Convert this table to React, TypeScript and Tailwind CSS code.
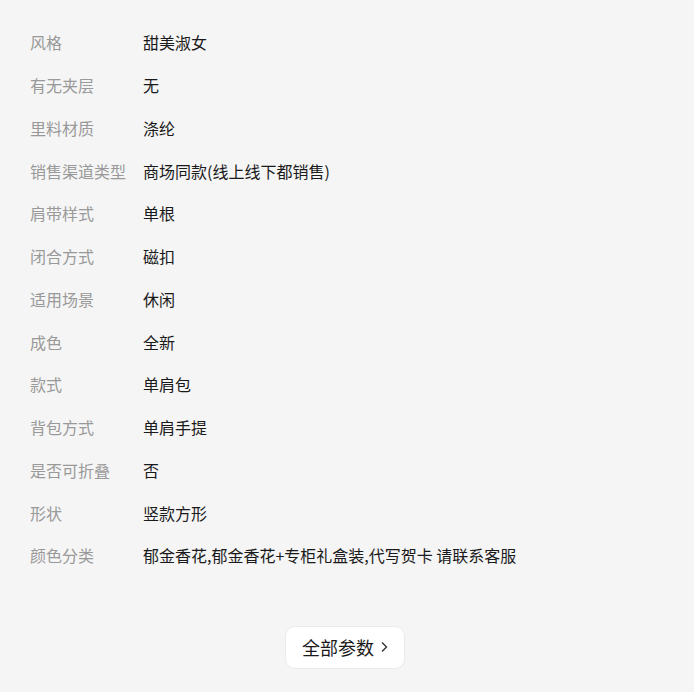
import React from "react";

const rows: [string, string][] = [
  ["风格", "甜美淑女"],
  ["有无夹层", "无"],
  ["里料材质", "涤纶"],
  ["销售渠道类型", "商场同款(线上线下都销售)"],
  ["肩带样式", "单根"],
  ["闭合方式", "磁扣"],
  ["适用场景", "休闲"],
  ["成色", "全新"],
  ["款式", "单肩包"],
  ["背包方式", "单肩手提"],
  ["是否可折叠", "否"],
  ["形状", "竖款方形"],
  ["颜色分类", "郁金香花,郁金香花+专柜礼盒装,代写贺卡 请联系客服"],
];

export default function App() {
  return (
    <div
      className="w-[694px] h-[692px] bg-[#f5f5f5] overflow-hidden"
      style={{ fontFamily: '"Noto Sans CJK SC", "Noto Sans", sans-serif' }}
    >
      <div className="flex flex-col pt-[21px] pl-[30px]">
        {rows.map(([k, v]) => (
          <div key={k} className="flex items-center h-[42.75px] text-[16px] leading-none">
            <div className="w-[113px] shrink-0 text-[#999999]">{k}</div>
            <div className="text-[#1a1a1a]">{v}</div>
          </div>
        ))}
      </div>
      <div className="flex justify-center mt-[49px] pr-[4px]">
        <button className="w-[120px] h-[43px] bg-white rounded-[10px] border border-[#ebebeb] flex items-center justify-center gap-[6px] text-[18px] text-[#1a1a1a] leading-none">
          <span>全部参数</span>
          <svg width="8" height="12" viewBox="0 0 8 12" fill="none">
            <path d="M2 1.5L6.5 6L2 10.5" stroke="#333" strokeWidth="1.4" />
          </svg>
        </button>
      </div>
    </div>
  );
}
